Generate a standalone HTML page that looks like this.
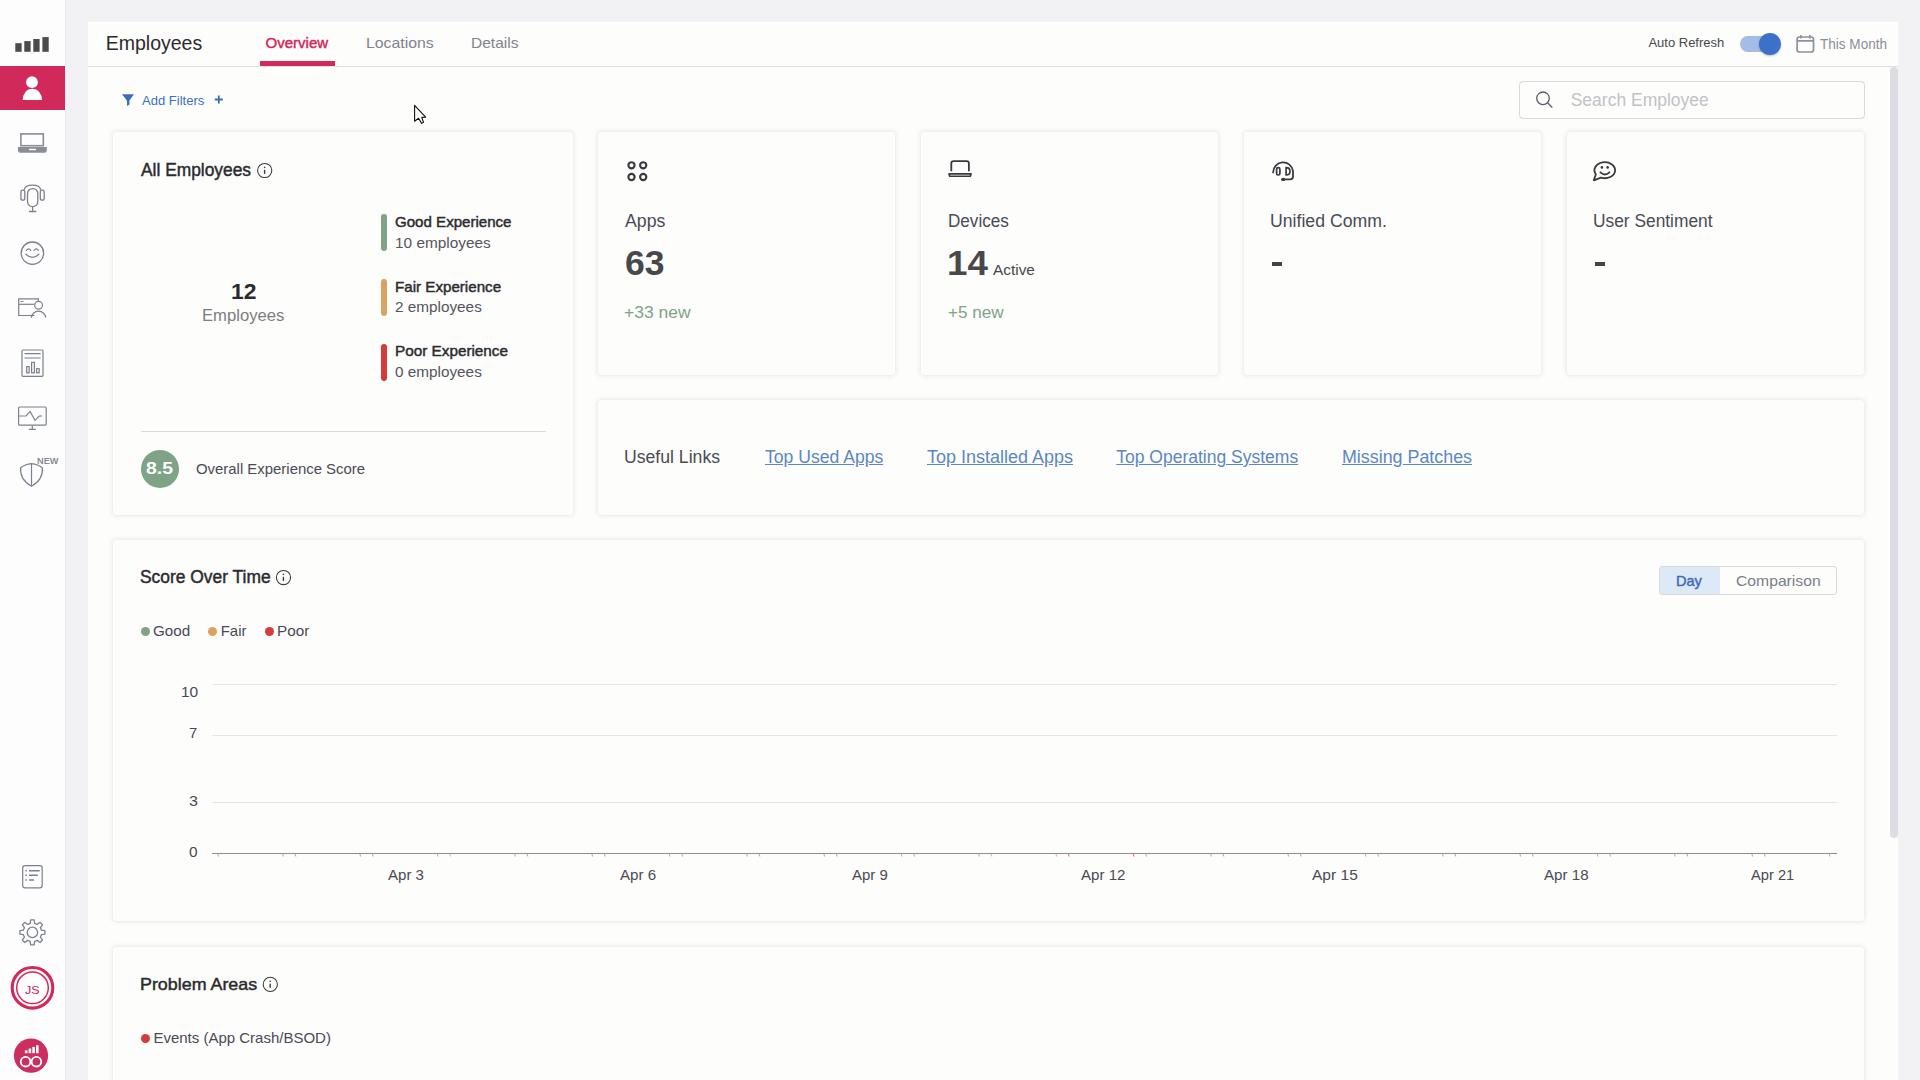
<!DOCTYPE html>
<html><head><meta charset="utf-8"><title>Employees</title>
<style>
html,body{margin:0;padding:0;}
body{width:1920px;height:1080px;overflow:hidden;position:relative;background:#f2f2f4;font-family:"Liberation Sans",sans-serif;}
.t{position:absolute;white-space:nowrap;line-height:1;transform-origin:0 0;}
.b{position:absolute;box-sizing:border-box;}
svg{position:absolute;overflow:visible;}
</style></head><body>
<div class="b" style="left:0px;top:0px;width:65px;height:1080px;background:#fdfdfd;"></div>
<div class="b" style="left:65px;top:0px;width:1px;height:1080px;background:#eaeaee;"></div>
<div class="b" style="left:0px;top:66px;width:65px;height:44px;background:#d2295b;"></div>
<div class="b" style="left:88px;top:22px;width:1810px;height:1058px;background:#fdfdfc;"></div>
<div class="b" style="left:88px;top:66px;width:1810px;height:1px;background:#dfdfe3;"></div>
<div class="b" style="left:1890px;top:67px;width:8px;height:771px;background:#dcdce3;border-radius:4px;"></div>
<div class="b" style="left:260px;top:61px;width:75px;height:5px;background:#d2295b;"></div>
<div class="b" style="left:1740px;top:36px;width:36px;height:16px;background:#a3bde6;border-radius:8px;"></div>
<div class="b" style="left:1759px;top:33px;width:22px;height:22px;background:#3b71c9;border-radius:50%;box-shadow:0 1px 2px rgba(0,0,0,0.25);"></div>
<div class="b" style="left:1519px;top:81px;width:346px;height:38px;border:1px solid #d9d9de;border-radius:4px;background:#fdfdfc;"></div>
<div class="b" style="left:113px;top:132px;width:460px;height:383px;background:#fdfdfc;border-radius:4px;box-shadow:0 0 4px 0.5px rgba(50,50,90,0.10);"></div>
<div class="b" style="left:598px;top:132px;width:297px;height:243px;background:#fdfdfc;border-radius:4px;box-shadow:0 0 4px 0.5px rgba(50,50,90,0.10);"></div>
<div class="b" style="left:921px;top:132px;width:297px;height:243px;background:#fdfdfc;border-radius:4px;box-shadow:0 0 4px 0.5px rgba(50,50,90,0.10);"></div>
<div class="b" style="left:1244px;top:132px;width:297px;height:243px;background:#fdfdfc;border-radius:4px;box-shadow:0 0 4px 0.5px rgba(50,50,90,0.10);"></div>
<div class="b" style="left:1567px;top:132px;width:297px;height:243px;background:#fdfdfc;border-radius:4px;box-shadow:0 0 4px 0.5px rgba(50,50,90,0.10);"></div>
<div class="b" style="left:598px;top:400px;width:1266px;height:115px;background:#fdfdfc;border-radius:4px;box-shadow:0 0 4px 0.5px rgba(50,50,90,0.10);"></div>
<div class="b" style="left:113px;top:540px;width:1751px;height:381px;background:#fdfdfc;border-radius:4px;box-shadow:0 0 4px 0.5px rgba(50,50,90,0.10);"></div>
<div class="b" style="left:113px;top:947px;width:1751px;height:153px;background:#fdfdfc;border-radius:4px;box-shadow:0 0 4px 0.5px rgba(50,50,90,0.10);"></div>
<div class="b" style="left:381px;top:214px;width:6px;height:37px;background:#7fa386;border-radius:3px;"></div>
<div class="b" style="left:381px;top:279px;width:6px;height:37px;background:#dca261;border-radius:3px;"></div>
<div class="b" style="left:381px;top:344px;width:6px;height:37px;background:#d63b3b;border-radius:3px;"></div>
<div class="b" style="left:141px;top:431px;width:405px;height:1px;background:#dcdce0;"></div>
<div class="b" style="left:141px;top:450px;width:38px;height:38px;background:#7fa386;border-radius:50%;"></div>
<div class="b" style="left:1272px;top:262px;width:10px;height:4px;background:#444448;"></div>
<div class="b" style="left:1595px;top:262px;width:10px;height:4px;background:#444448;"></div>
<div class="b" style="left:141.0px;top:626.5px;width:9.0px;height:9.0px;background:#7fa386;border-radius:50%;"></div>
<div class="b" style="left:208.0px;top:626.5px;width:9.0px;height:9.0px;background:#dca261;border-radius:50%;"></div>
<div class="b" style="left:264.5px;top:626.5px;width:9.0px;height:9.0px;background:#d63b3b;border-radius:50%;"></div>
<div class="b" style="left:1659px;top:566px;width:178px;height:29px;border:1px solid #d8d8dd;border-radius:3px;background:#fdfdfc;"></div>
<div class="b" style="left:1660px;top:567px;width:60px;height:27px;background:#dde9f7;border-radius:2px 0 0 2px;"></div>
<div class="b" style="left:212px;top:684px;width:1625px;height:1px;background:#e6e6e9;"></div>
<div class="b" style="left:212px;top:735px;width:1625px;height:1px;background:#e6e6e9;"></div>
<div class="b" style="left:212px;top:802px;width:1625px;height:1px;background:#e6e6e9;"></div>
<div class="b" style="left:212px;top:853px;width:1625px;height:1px;background:#8f8f93;"></div>
<div class="b" style="left:141px;top:1033.5px;width:9px;height:9.0px;background:#d63b3b;border-radius:50%;"></div>
<svg width="1920" height="1080" style="left:0;top:0;"><rect x="15.3" y="43.2" width="6.3" height="8.6" fill="#4b4b4e"/><rect x="24.3" y="41.1" width="6.3" height="10.7" fill="#4b4b4e"/><rect x="33.3" y="39" width="6.3" height="12.8" fill="#4b4b4e"/><rect x="42.4" y="37.1" width="6.3" height="14.7" fill="#4b4b4e"/><circle cx="32" cy="82.2" r="5.9" fill="#fff"/><path d="M22.7,100 A9.65,11.2 0 0 1 42,100 Z" fill="#fff"/><rect x="20.9" y="133.9" width="22.4" height="11.8" fill="none" stroke="#8a8c9a" stroke-width="1.6"/><path d="M18,147 H46.8 V150.5 Q46.8,152.7 44.5,152.7 H20.3 Q18,152.7 18,150.5 Z" fill="#8a8c9a"/><rect x="29" y="148.8" width="7" height="1.4" fill="#fdfdfd"/><g transform="translate(12,178)" fill="none" stroke="#7d808e" stroke-width="1.3"><path d="M12.2,11.8 Q13,7.2 20.5,7.2 Q28,7.2 28.7,11.8"/><rect x="8.9" y="12.2" width="3.9" height="10" rx="1.95"/><rect x="28.3" y="12.2" width="3.9" height="10" rx="1.95"/><rect x="15.5" y="10.6" width="10.3" height="18" rx="5"/><path d="M20.6,28.6 V33.5 M16.9,33.5 H24.3"/></g><g fill="none" stroke="#7d808e" stroke-width="1.3" stroke-linecap="round"><circle cx="32.4" cy="253.2" r="11.2"/><path d="M26.4,250.3 Q28.6,247.6 30.8,250.3"/><path d="M34,250.3 Q36.2,247.6 38.4,250.3"/><path d="M26,254.3 Q32.4,260.5 38.8,254.3"/></g><g fill="none" stroke="#7d808e" stroke-width="1.2"><path d="M34.5,315.5 H18.7 V298.8 H38.4 V301"/><path d="M18.7,304.3 H34.2"/><path d="M20.4,301.5 H23.6" stroke-width="0.9"/><circle cx="38.6" cy="305.3" r="3.9"/><path d="M31.3,317.6 A7.3,7.3 0 0 1 45.8,317.6"/></g><g fill="none" stroke="#7d808e" stroke-width="1.2"><rect x="22" y="350" width="21" height="26.3" rx="1"/><path d="M24.5,353.7 H40.6 M24.5,358 H40.6"/><rect x="26.7" y="366.6" width="2.4" height="6.2"/><rect x="31.6" y="362.4" width="2.8" height="10.4"/><rect x="36.6" y="368.7" width="2.6" height="4.1"/></g><g fill="none" stroke="#7d808e" stroke-width="1.2"><rect x="18.6" y="407" width="27.6" height="18.2" rx="1"/><path d="M32.3,425.4 V429.4 M28.8,429.4 H35.8"/><path d="M19,416 H26 L30.1,411.5 L35,420.3 L39.2,416 H42"/></g><g fill="none" stroke="#7d808e" stroke-width="1.2"><path d="M31.5,463.6 Q25,464.2 20.6,467.8 Q19.8,480 31.5,486.2 Q43.2,480 42.4,467.8 Q38,464.2 31.5,463.6 Z"/><path d="M31.5,463.6 V486.2"/></g><g fill="none" stroke="#7d808e" stroke-width="1.2"><rect x="22.7" y="865.7" width="19.5" height="22.1" rx="2.3"/><path d="M25.3,870.7 H26.8 M29,870.7 H39.7 M25.3,875.3 H26.8 M29,875.3 H37.7 M25.3,880.1 H26.8 M29,880.1 H34" stroke-width="1.5"/></g><path d="M30.15,923.38 L30.65,919.92 L34.15,919.92 L34.65,923.38 L37.19,924.43 L39.98,922.34 L42.46,924.82 L40.37,927.61 L41.42,930.15 L44.88,930.65 L44.88,934.15 L41.42,934.65 L40.37,937.19 L42.46,939.98 L39.98,942.46 L37.19,940.37 L34.65,941.42 L34.15,944.88 L30.65,944.88 L30.15,941.42 L27.61,940.37 L24.82,942.46 L22.34,939.98 L24.43,937.19 L23.38,934.65 L19.92,934.15 L19.92,930.65 L23.38,930.15 L24.43,927.61 L22.34,924.82 L24.82,922.34 L27.61,924.43 Z" fill="none" stroke="#7d808e" stroke-width="1.3" stroke-linejoin="round"/><circle cx="32.4" cy="932.4" r="5.2" fill="none" stroke="#7d808e" stroke-width="1.3"/><circle cx="32.5" cy="987.8" r="20.3" fill="none" stroke="#d2295b" stroke-width="3.1"/><circle cx="32.5" cy="987.8" r="15.8" fill="none" stroke="#d2295b" stroke-width="1.5"/><circle cx="31" cy="1055.6" r="17.1" fill="#cc2f5f"/><rect x="24.9" y="1050.4" width="2.6" height="2.8" fill="#fff"/><rect x="28.6" y="1048.6" width="2.6" height="4.6" fill="#fff"/><rect x="32.3" y="1046.9" width="2.6" height="6.3" fill="#fff"/><rect x="36" y="1045.3" width="2.6" height="7.9" fill="#fff"/><circle cx="25.6" cy="1061.7" r="4.8" fill="none" stroke="#fff" stroke-width="1.9"/><circle cx="36.4" cy="1061.7" r="4.8" fill="none" stroke="#fff" stroke-width="1.9"/><g fill="none" stroke="#8e909c" stroke-width="1.7"><rect x="1797.1" y="37" width="16.4" height="15" rx="2.3"/><path d="M1797.1,40.9 H1813.5 M1800.9,34.9 V38.6 M1809.9,34.9 V38.6"/></g><path d="M122,94.2 L133.9,94.2 L129.5,100.4 L129.4,104.4 L127.1,106.1 L126.9,100.4 Z" fill="#3d6cba"/><path d="M214.8,99.5 H222.8 M218.8,95.5 V103.5" stroke="#3d6cba" stroke-width="1.8"/><g fill="none" stroke="#5a5d6a" stroke-width="1.3"><circle cx="1543" cy="98.3" r="6.3"/><path d="M1547.8,103 L1552.3,107.5"/></g><g fill="none" stroke="#3a3a3e" stroke-width="1.05"><circle cx="264.7" cy="170.5" r="7.1"/><path d="M264.59999999999997,169.8 V173.9" stroke-width="1.4"/></g><circle cx="264.59999999999997" cy="167.4" r="0.8" fill="#3a3a3e"/><g fill="none" stroke="#3a3a3e" stroke-width="1.05"><circle cx="283.5" cy="577.5" r="7.1"/><path d="M283.4,576.8 V580.9" stroke-width="1.4"/></g><circle cx="283.4" cy="574.4" r="0.8" fill="#3a3a3e"/><g fill="none" stroke="#3a3a3e" stroke-width="1.05"><circle cx="270.3" cy="984.4" r="7.1"/><path d="M270.2,983.6999999999999 V987.8" stroke-width="1.4"/></g><circle cx="270.2" cy="981.3" r="0.8" fill="#3a3a3e"/><circle cx="631.5" cy="165.3" r="3.1" fill="none" stroke="#3a3a3e" stroke-width="2.1"/><circle cx="643.2" cy="165.3" r="3.1" fill="none" stroke="#3a3a3e" stroke-width="2.1"/><circle cx="631.5" cy="177" r="3.1" fill="none" stroke="#3a3a3e" stroke-width="2.1"/><circle cx="643.2" cy="177" r="3.1" fill="none" stroke="#3a3a3e" stroke-width="2.1"/><g fill="none" stroke="#3a3a3e" stroke-width="1.8" stroke-linejoin="round"><path d="M951.3,171.3 V163.4 Q951.3,161.2 953.5,161.2 H966.7 Q968.9,161.2 968.9,163.4 V171.3"/><path d="M948.9,173.9 H971.1 L970.3,176.3 H949.7 Z" stroke-width="1.6"/></g><g fill="none" stroke="#3a3a3e" stroke-width="1.8" stroke-linecap="round"><path d="M1273.1,172.4 A10,10 0 0 1 1293,171 V176.5 Q1293,179.4 1290.1,179.4 H1284"/><rect x="1276.6" y="167.6" width="3.3" height="7.4" rx="1.6" stroke-width="1.7"/><path d="M1286.1,167.7 Q1290,167.7 1290,171.3 Q1290,175 1286.1,175 Z" stroke-width="1.7"/></g><ellipse cx="1283.2" cy="179.4" rx="2.2" ry="1.6" fill="#3a3a3e"/><g fill="none" stroke="#3a3a3e" stroke-width="1.8" stroke-linecap="round" stroke-linejoin="round"><path d="M1595.88,174.20 A10.3,8.0 0 1 1 1600.94,177.62 L1593.8,180.3 Z"/><path d="M1600.4,172.3 Q1604.9,176.6 1609.4,172.3"/></g><circle cx="1601.9" cy="167.4" r="1.3" fill="#3a3a3e"/><circle cx="1607.6" cy="167.4" r="1.3" fill="#3a3a3e"/><path d="M217.7,854 L218.5,856.5" stroke="#7fa386" stroke-width="1" fill="none" opacity="0.8"/><path d="M282.6,854 L283.4,856.5" stroke="#7fa386" stroke-width="1" fill="none" opacity="0.8"/><path d="M295.1,854 L295.9,856.5" stroke="#7fa386" stroke-width="1" fill="none" opacity="0.8"/><path d="M359.9,854 L360.7,856.5" stroke="#7fa386" stroke-width="1" fill="none" opacity="0.8"/><path d="M372.4,854 L373.2,856.5" stroke="#7fa386" stroke-width="1" fill="none" opacity="0.8"/><path d="M437.3,854 L438.1,856.5" stroke="#7fa386" stroke-width="1" fill="none" opacity="0.8"/><path d="M449.8,854 L450.6,856.5" stroke="#dca261" stroke-width="1" fill="none" opacity="0.8"/><path d="M514.6,854 L515.4,856.5" stroke="#7fa386" stroke-width="1" fill="none" opacity="0.8"/><path d="M527.1,854 L527.9,856.5" stroke="#7fa386" stroke-width="1" fill="none" opacity="0.8"/><path d="M591.9,854 L592.7,856.5" stroke="#7fa386" stroke-width="1" fill="none" opacity="0.8"/><path d="M604.4,854 L605.2,856.5" stroke="#7fa386" stroke-width="1" fill="none" opacity="0.8"/><path d="M669.2,854 L670.0,856.5" stroke="#7fa386" stroke-width="1" fill="none" opacity="0.8"/><path d="M681.8,854 L682.5,856.5" stroke="#7fa386" stroke-width="1" fill="none" opacity="0.8"/><path d="M746.6,854 L747.4,856.5" stroke="#7fa386" stroke-width="1" fill="none" opacity="0.8"/><path d="M759.1,854 L759.9,856.5" stroke="#7fa386" stroke-width="1" fill="none" opacity="0.8"/><path d="M823.9,854 L824.7,856.5" stroke="#7fa386" stroke-width="1" fill="none" opacity="0.8"/><path d="M836.4,854 L837.2,856.5" stroke="#7fa386" stroke-width="1" fill="none" opacity="0.8"/><path d="M901.2,854 L902.0,856.5" stroke="#7fa386" stroke-width="1" fill="none" opacity="0.8"/><path d="M913.7,854 L914.5,856.5" stroke="#7fa386" stroke-width="1" fill="none" opacity="0.8"/><path d="M978.6,854 L979.4,856.5" stroke="#7fa386" stroke-width="1" fill="none" opacity="0.8"/><path d="M991.1,854 L991.9,856.5" stroke="#dca261" stroke-width="1" fill="none" opacity="0.8"/><path d="M1055.9,854 L1056.7,856.5" stroke="#dca261" stroke-width="1" fill="none" opacity="0.8"/><path d="M1068.4,854 L1069.2,856.5" stroke="#d63b3b" stroke-width="1" fill="none" opacity="0.8"/><path d="M1133.2,854 L1134.0,856.5" stroke="#d63b3b" stroke-width="1" fill="none" opacity="0.8"/><path d="M1145.7,854 L1146.5,856.5" stroke="#7fa386" stroke-width="1" fill="none" opacity="0.8"/><path d="M1210.6,854 L1211.4,856.5" stroke="#7fa386" stroke-width="1" fill="none" opacity="0.8"/><path d="M1223.1,854 L1223.9,856.5" stroke="#7fa386" stroke-width="1" fill="none" opacity="0.8"/><path d="M1287.9,854 L1288.7,856.5" stroke="#7fa386" stroke-width="1" fill="none" opacity="0.8"/><path d="M1300.4,854 L1301.2,856.5" stroke="#7fa386" stroke-width="1" fill="none" opacity="0.8"/><path d="M1365.2,854 L1366.0,856.5" stroke="#7fa386" stroke-width="1" fill="none" opacity="0.8"/><path d="M1377.7,854 L1378.5,856.5" stroke="#7fa386" stroke-width="1" fill="none" opacity="0.8"/><path d="M1442.5,854 L1443.3,856.5" stroke="#7fa386" stroke-width="1" fill="none" opacity="0.8"/><path d="M1455.0,854 L1455.8,856.5" stroke="#7fa386" stroke-width="1" fill="none" opacity="0.8"/><path d="M1519.9,854 L1520.7,856.5" stroke="#7fa386" stroke-width="1" fill="none" opacity="0.8"/><path d="M1532.4,854 L1533.2,856.5" stroke="#7fa386" stroke-width="1" fill="none" opacity="0.8"/><path d="M1597.2,854 L1598.0,856.5" stroke="#7fa386" stroke-width="1" fill="none" opacity="0.8"/><path d="M1609.7,854 L1610.5,856.5" stroke="#7fa386" stroke-width="1" fill="none" opacity="0.8"/><path d="M1674.5,854 L1675.3,856.5" stroke="#7fa386" stroke-width="1" fill="none" opacity="0.8"/><path d="M1687.0,854 L1687.8,856.5" stroke="#7fa386" stroke-width="1" fill="none" opacity="0.8"/><path d="M1751.9,854 L1752.7,856.5" stroke="#7fa386" stroke-width="1" fill="none" opacity="0.8"/><path d="M1764.4,854 L1765.2,856.5" stroke="#7fa386" stroke-width="1" fill="none" opacity="0.8"/><path d="M1829.2,854 L1830.0,856.5" stroke="#7fa386" stroke-width="1" fill="none" opacity="0.8"/><path d="M414.6,105.4 V121.3 L418.5,118.3 L421.7,123.4 L423.5,122.2 L421.7,117.4 L425.6,117.2 Z" fill="#fff" stroke="#111" stroke-width="1.1" stroke-linejoin="round"/></svg>
<div class="t" style="left:105.74px;top:34px;font-size:19.5px;color:#2b2b2e;">Employees</div>
<div class="t" style="left:265.60px;top:35px;font-size:15px;-webkit-text-stroke:0.45px currentColor;color:#d2295b;">Overview</div>
<div class="t" style="left:366.19px;top:35px;font-size:15px;color:#80838f;transform:scaleX(1.0556);">Locations</div>
<div class="t" style="left:471.47px;top:35px;font-size:15px;color:#80838f;transform:scaleX(1.0341);">Details</div>
<div class="t" style="left:1648.40px;top:36px;font-size:13px;color:#48484e;">Auto Refresh</div>
<div class="t" style="left:1820.00px;top:37px;font-size:14px;color:#8a8d99;transform:scaleX(0.9676);">This Month</div>
<div class="t" style="left:142.40px;top:94px;font-size:13.5px;color:#3d6fc0;transform:scaleX(0.9656);">Add Filters</div>
<div class="t" style="left:1570.70px;top:92px;font-size:17.5px;color:#c2c2c7;">Search Employee</div>
<div class="t" style="left:141.25px;top:161px;font-size:18px;-webkit-text-stroke:0.45px currentColor;color:#2b2b2e;transform:scaleX(0.9649);">All Employees</div>
<div class="t" style="left:230.56px;top:281px;font-size:22px;font-weight:bold;color:#2b2b2e;transform:scaleX(1.0391);">12</div>
<div class="t" style="left:201.71px;top:308px;font-size:16px;color:#7d7d80;transform:scaleX(1.0404);">Employees</div>
<div class="t" style="left:394.79px;top:214px;font-size:15px;-webkit-text-stroke:0.45px currentColor;color:#2b2b2e;transform:scaleX(1.0052);">Good Experience</div>
<div class="t" style="left:394.74px;top:236px;font-size:14.5px;color:#55555c;transform:scaleX(1.0607);">10 employees</div>
<div class="t" style="left:394.79px;top:279px;font-size:15px;-webkit-text-stroke:0.45px currentColor;color:#2b2b2e;transform:scaleX(1.0096);">Fair Experience</div>
<div class="t" style="left:394.74px;top:300px;font-size:14.5px;color:#55555c;transform:scaleX(1.0556);">2 employees</div>
<div class="t" style="left:394.78px;top:343px;font-size:15px;-webkit-text-stroke:0.45px currentColor;color:#2b2b2e;transform:scaleX(1.0191);">Poor Experience</div>
<div class="t" style="left:394.74px;top:365px;font-size:14.5px;color:#55555c;transform:scaleX(1.0556);">0 employees</div>
<div class="t" style="left:146.46px;top:460px;font-size:17px;font-weight:bold;color:#ffffff;transform:scaleX(1.1409);">8.5</div>
<div class="t" style="left:196.41px;top:461px;font-size:15px;color:#4a4a55;transform:scaleX(0.9941);">Overall Experience Score</div>
<div class="t" style="left:625.30px;top:213px;font-size:17.5px;color:#4a4a55;transform:scaleX(1.0103);">Apps</div>
<div class="t" style="left:625.17px;top:246px;font-size:34.5px;font-weight:bold;color:#48484c;transform:scaleX(1.0306);">63</div>
<div class="t" style="left:623.94px;top:304px;font-size:16.5px;color:#7fa386;transform:scaleX(1.0613);">+33 new</div>
<div class="t" style="left:947.72px;top:213px;font-size:17.5px;color:#4a4a55;transform:scaleX(0.9770);">Devices</div>
<div class="t" style="left:946.57px;top:246px;font-size:34.5px;font-weight:bold;color:#48484c;transform:scaleX(1.0639);">14</div>
<div class="t" style="left:993.00px;top:262px;font-size:15px;color:#48484c;transform:scaleX(1.0250);">Active</div>
<div class="t" style="left:947.66px;top:304px;font-size:16.5px;color:#7fa386;transform:scaleX(1.0377);">+5 new</div>
<div class="t" style="left:1270.39px;top:213px;font-size:17.5px;color:#4a4a55;transform:scaleX(1.0097);">Unified Comm.</div>
<div class="t" style="left:1593.01px;top:213px;font-size:17.5px;color:#4a4a55;transform:scaleX(0.9908);">User Sentiment</div>
<div class="t" style="left:624.39px;top:449px;font-size:17.5px;color:#4a4a55;transform:scaleX(1.0074);">Useful Links</div>
<div class="t" style="left:765.00px;top:449px;font-size:17.5px;color:#5b87c2;transform:scaleX(1.0043);text-decoration:underline;">Top Used Apps</div>
<div class="t" style="left:926.90px;top:449px;font-size:17.5px;color:#5b87c2;transform:scaleX(1.0284);text-decoration:underline;">Top Installed Apps</div>
<div class="t" style="left:1116.25px;top:449px;font-size:17.5px;color:#5b87c2;text-decoration:underline;">Top Operating Systems</div>
<div class="t" style="left:1341.68px;top:449px;font-size:17.5px;color:#5b87c2;transform:scaleX(1.0202);text-decoration:underline;">Missing Patches</div>
<div class="t" style="left:140.25px;top:569px;font-size:17.5px;-webkit-text-stroke:0.45px currentColor;color:#2b2b2e;transform:scaleX(0.9950);">Score Over Time</div>
<div class="t" style="left:153.49px;top:623px;font-size:15px;color:#4a4a55;transform:scaleX(1.0143);">Good</div>
<div class="t" style="left:220.70px;top:623px;font-size:15px;color:#4a4a55;">Fair</div>
<div class="t" style="left:277.38px;top:623px;font-size:15px;color:#4a4a55;transform:scaleX(1.0194);">Poor</div>
<div class="t" style="left:1675.90px;top:574px;font-size:14.5px;-webkit-text-stroke:0.45px currentColor;color:#3d6cb5;transform:scaleX(1.0040);">Day</div>
<div class="t" style="left:1735.92px;top:574px;font-size:14.5px;color:#7a7d88;transform:scaleX(1.0829);">Comparison</div>
<div class="t" style="left:180.67px;top:684px;font-size:15px;color:#4a4a55;transform:scaleX(1.0333);">10</div>
<div class="t" style="left:189.31px;top:725px;font-size:15px;color:#4a4a55;transform:scaleX(0.9857);">7</div>
<div class="t" style="left:188.63px;top:793px;font-size:15px;color:#4a4a55;transform:scaleX(1.0714);">3</div>
<div class="t" style="left:188.97px;top:844px;font-size:15px;color:#4a4a55;transform:scaleX(1.0286);">0</div>
<div class="t" style="left:388.30px;top:868px;font-size:14.5px;color:#4a4a55;transform:scaleX(1.0382);">Apr 3</div>
<div class="t" style="left:620.00px;top:868px;font-size:14.5px;color:#4a4a55;transform:scaleX(1.0441);">Apr 6</div>
<div class="t" style="left:852.30px;top:868px;font-size:14.5px;color:#4a4a55;transform:scaleX(1.0353);">Apr 9</div>
<div class="t" style="left:1080.50px;top:868px;font-size:14.5px;color:#4a4a55;transform:scaleX(1.0405);">Apr 12</div>
<div class="t" style="left:1311.90px;top:868px;font-size:14.5px;color:#4a4a55;transform:scaleX(1.0714);">Apr 15</div>
<div class="t" style="left:1543.90px;top:868px;font-size:14.5px;color:#4a4a55;transform:scaleX(1.0429);">Apr 18</div>
<div class="t" style="left:1751.00px;top:868px;font-size:14.5px;color:#4a4a55;transform:scaleX(1.0119);">Apr 21</div>
<div class="t" style="left:140.35px;top:976px;font-size:17px;-webkit-text-stroke:0.45px currentColor;color:#2b2b2e;transform:scaleX(1.0509);">Problem Areas</div>
<div class="t" style="left:153.40px;top:1030px;font-size:15px;color:#4a4a55;">Events (App Crash/BSOD)</div>
<div class="t" style="left:36.74px;top:457px;font-size:8.7px;font-weight:bold;color:#8a8d99;transform:scaleX(1.0579);">NEW</div>
<div class="t" style="left:25.40px;top:985px;font-size:11.5px;color:#c8275a;transform:scaleX(1.0923);">JS</div>
</body></html>
